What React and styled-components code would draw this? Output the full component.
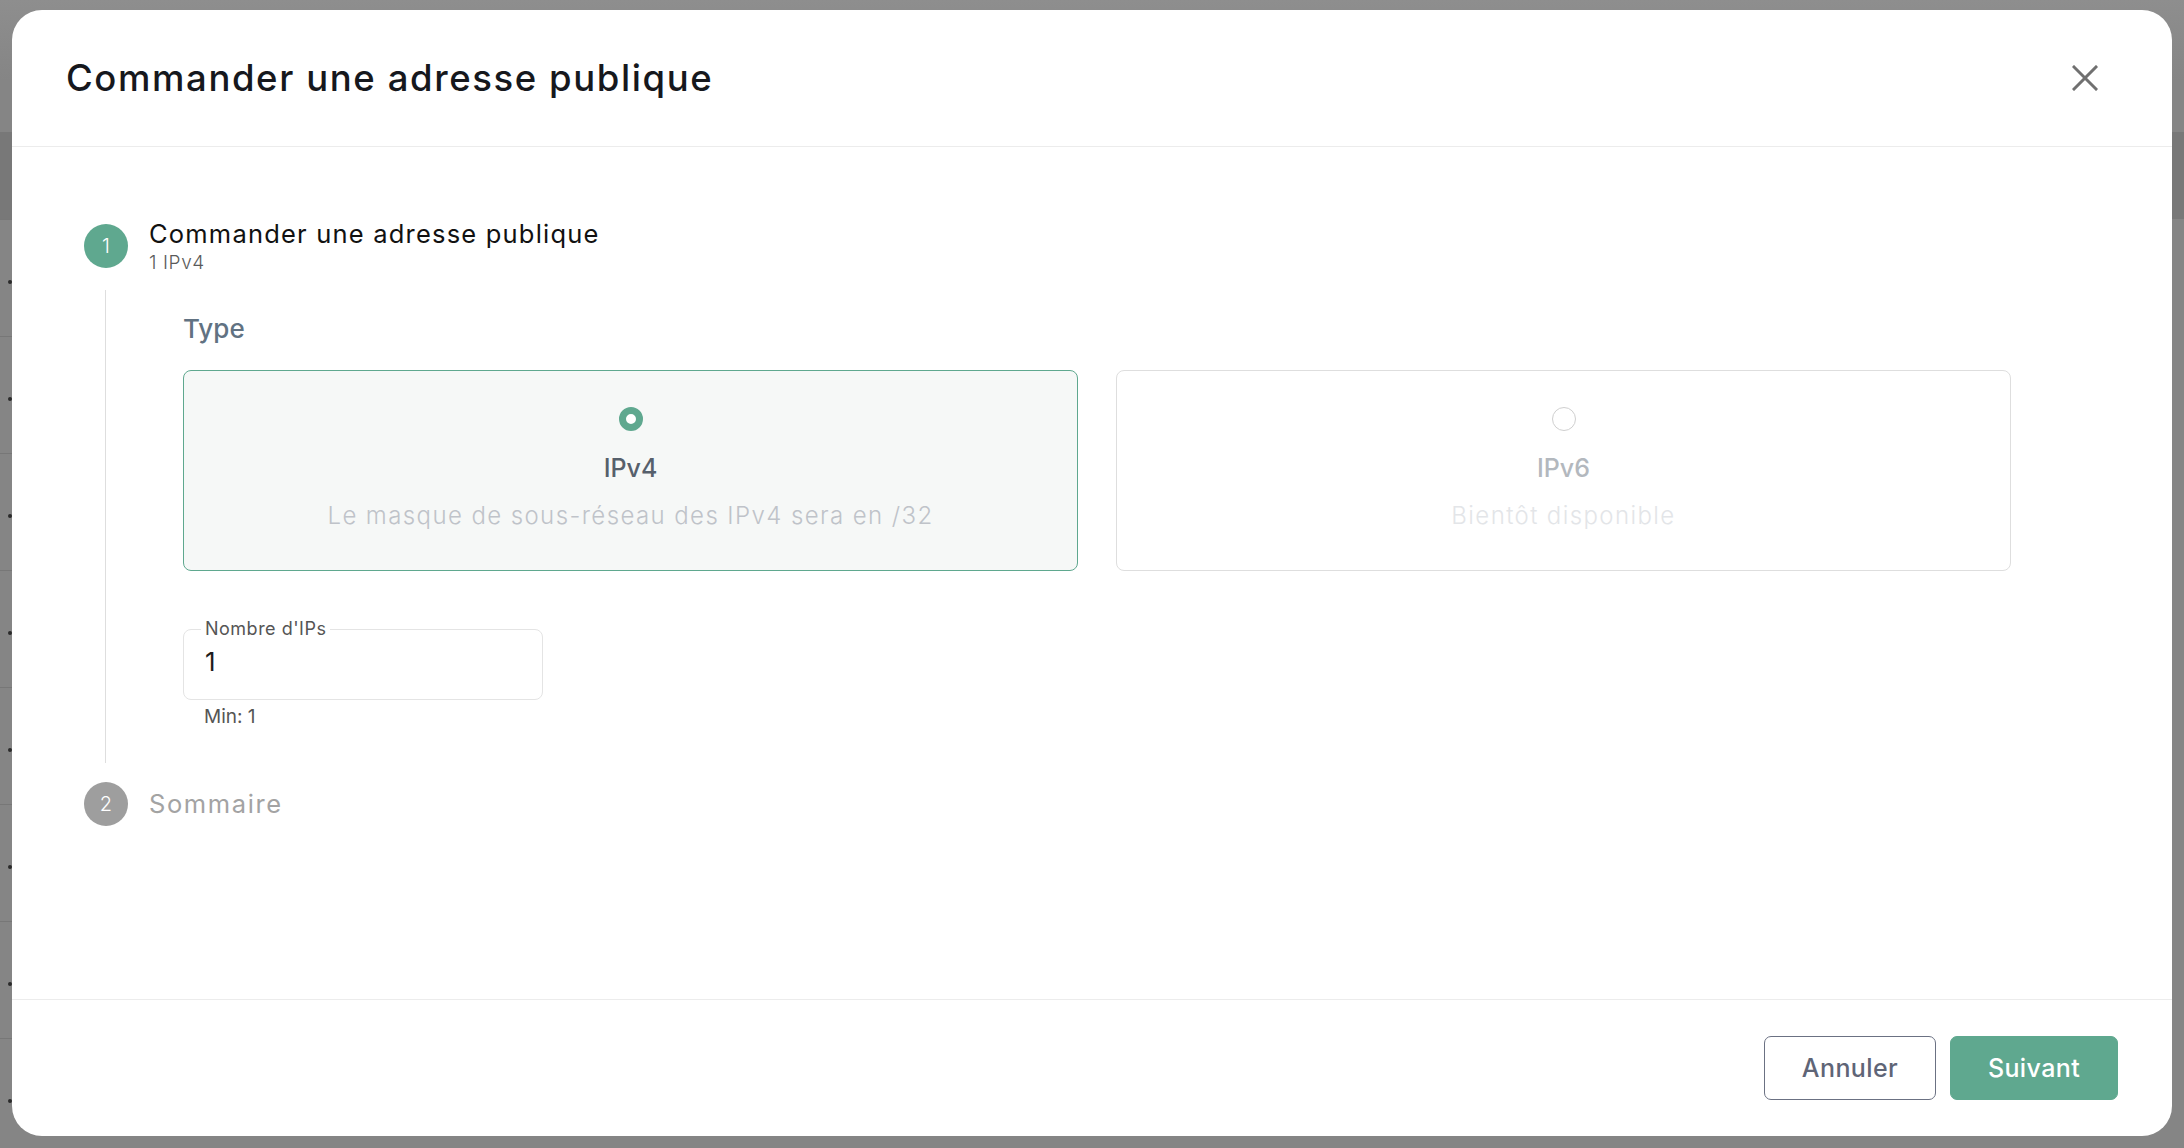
import React from "react";
import styled, { createGlobalStyle } from "styled-components";

const GlobalStyle = createGlobalStyle`
  html, body {
    margin: 0;
    height: 100%;
  }
  body {
    background: #858585;
    font-family: Inter, "Noto Sans", sans-serif;
    overflow: hidden;
  }
`;

const TEAL = "#5fa88f";

const Screen = styled.div`
  position: relative;
  width: 2184px;
  height: 1148px;
  overflow: hidden;
`;

/* dimmed page behind the dialog: only its left edge peeks out */
const Page = styled.div`
  padding-top: 132px;
  background: linear-gradient(#8e8e8e 0, #858585 80px);
  height: 100%;
  box-sizing: border-box;
`;

const PageHead = styled.div`
  height: 87px;
  background: #787878;
`;

const PageRow = styled.div`
  height: 116px;
  border-top: 1px solid #777;
  display: flex;
  align-items: center;
  justify-content: flex-end;
  width: 14px;

  &::after {
    content: "";
    width: 4px;
    height: 4px;
    margin: 8px 2px 0 0;
    border-radius: 50%;
    background: #2a2a2a;
  }
`;

const Overlay = styled.div`
  position: absolute;
  inset: 0;
  padding: 10px 12px 12px;
`;

const Modal = styled.div`
  height: 100%;
  background: #fff;
  border-radius: 30px;
  display: flex;
  flex-direction: column;
  overflow: hidden;
`;

const Header = styled.header`
  height: 136px;
  flex: none;
  padding: 0 54px;
  display: flex;
  align-items: center;
  justify-content: space-between;
  border-bottom: 1px solid #ececec;

  h1 {
    margin: 0;
    font-size: 36.5px;
    font-weight: 500;
    letter-spacing: 1.6px;
    color: #16181d;
  }
`;

const CloseButton = styled.button`
  width: 40px;
  height: 40px;
  margin-right: 13px;
  padding: 0;
  border: 0;
  background: none;
  display: flex;
  align-items: center;
  justify-content: center;
  cursor: pointer;
`;

const Body = styled.main`
  flex: 1;
  padding: 70px 0 0 72px;
`;

const StepHead = styled.div`
  display: flex;
  align-items: center;
  gap: 21px;
`;

const StepCircle = styled.div`
  width: 44px;
  height: 44px;
  flex: none;
  border-radius: 50%;
  background: ${(p) => p.$color};
  color: #fff;
  font-size: 20px;
  font-weight: 300;
  display: flex;
  align-items: center;
  justify-content: center;
`;

const StepTitle = styled.div`
  font-size: 25.5px;
  line-height: 34px;
  letter-spacing: ${(p) => (p.$muted ? "1.6px" : "1.2px")};
  color: ${(p) => (p.$muted ? "#a3a3a3" : "#111")};
`;

const StepSub = styled.div`
  font-size: 19px;
  line-height: 24px;
  font-weight: 300;
  letter-spacing: 0.6px;
  color: #5a5a5a;
`;

const StepContent = styled.div`
  margin: 15px 0 0 21px;
  border-left: 1.5px solid #dedede;
  padding: 21px 0 33px 77px;
`;

const SectionLabel = styled.div`
  font-size: 26px;
  line-height: 36px;
  font-weight: 500;
  color: #617282;
`;

const CardGrid = styled.div`
  margin-top: 23px;
  width: 1828px;
  display: grid;
  grid-template-columns: 1fr 1fr;
  gap: 38px;
`;

const Card = styled.div`
  height: 201px;
  box-sizing: border-box;
  border: 1.5px solid ${(p) => (p.$selected ? TEAL : "#dedede")};
  background: ${(p) => (p.$selected ? "#f6f8f7" : "#fff")};
  border-radius: 8px;
  padding-top: 36px;
  display: flex;
  flex-direction: column;
  align-items: center;
  cursor: ${(p) => (p.$disabled ? "default" : "pointer")};
`;

const Radio = styled.span`
  width: 24px;
  height: 24px;
  box-sizing: border-box;
  border-radius: 50%;
  background: #fff;
  border: ${(p) => (p.$checked ? `7px solid ${TEAL}` : "1.5px solid #cfcfcf")};
`;

const CardTitle = styled.div`
  margin-top: 20px;
  font-size: 25px;
  line-height: 34px;
  font-weight: 500;
  color: ${(p) => (p.$disabled ? "#b3b8be" : "#56606c")};
`;

const CardText = styled.div`
  margin-top: 14px;
  font-size: 24px;
  line-height: 34px;
  font-weight: 300;
  letter-spacing: 1.4px;
  color: ${(p) => (p.$disabled ? "#e3e5e8" : "#bfc3c9")};
`;

const Field = styled.fieldset`
  margin: 47px 0 0;
  width: 360px;
  box-sizing: border-box;
  padding: 0 17px 15px;
  border: 1px solid #e4e4e4;
  border-radius: 8px;

  legend {
    padding: 0 4px;
    font-size: 18px;
    line-height: 22px;
    letter-spacing: 0.5px;
    color: #555;
  }

  input {
    display: block;
    width: 100%;
    box-sizing: border-box;
    margin: 0;
    padding: 0 4px;
    border: 0;
    outline: none;
    background: none;
    font-family: inherit;
    font-size: 26px;
    line-height: 44px;
    height: 44px;
    color: #1c1c1c;
  }
`;

const Helper = styled.div`
  margin: 4px 0 0 21px;
  font-size: 19px;
  line-height: 26px;
  color: #555;
`;

const NextStep = styled(StepHead)`
  margin-top: 19px;
`;

const Footer = styled.footer`
  flex: none;
  border-top: 1px solid #ececec;
  padding: 36px 54px;
  display: flex;
  justify-content: flex-end;
  gap: 14px;
`;

const Button = styled.button`
  height: 64px;
  width: ${(p) => p.$width}px;
  border-radius: 7px;
  font-family: inherit;
  font-size: 25px;
  font-weight: 500;
  letter-spacing: 0.4px;
  cursor: pointer;
  border: 1.5px solid ${(p) => (p.$primary ? TEAL : "#6b7183")};
  background: ${(p) => (p.$primary ? TEAL : "#fff")};
  color: ${(p) => (p.$primary ? "#fff" : "#5f6577")};
`;

function CloseIcon() {
  return (
    <svg width="26" height="26" viewBox="0 0 26 26">
      <path
        d="M2 2 L24 24 M24 2 L2 24"
        stroke="#707070"
        strokeWidth="3"
        strokeLinecap="square"
        fill="none"
      />
    </svg>
  );
}

const types = [
  {
    id: "ipv4",
    title: "IPv4",
    text: "Le masque de sous-réseau des IPv4 sera en /32",
    selected: true,
  },
  { id: "ipv6", title: "IPv6", text: "Bientôt disponible", disabled: true },
];

const pageRows = Array.from({ length: 8 }, (_, i) => i);

export default function App() {
  return (
    <>
      <GlobalStyle />
      <Screen>
        <Page>
          <PageHead />
          {pageRows.map((i) => (
            <PageRow key={i} />
          ))}
        </Page>

        <Overlay>
          <Modal>
            <Header>
              <h1>Commander une adresse publique</h1>
              <CloseButton aria-label="Fermer">
                <CloseIcon />
              </CloseButton>
            </Header>

            <Body>
              <StepHead>
                <StepCircle $color={TEAL}>1</StepCircle>
                <div>
                  <StepTitle>Commander une adresse publique</StepTitle>
                  <StepSub>1 IPv4</StepSub>
                </div>
              </StepHead>

              <StepContent>
                <SectionLabel>Type</SectionLabel>
                <CardGrid>
                  {types.map((t) => (
                    <Card key={t.id} $selected={t.selected} $disabled={t.disabled}>
                      <Radio $checked={t.selected} />
                      <CardTitle $disabled={t.disabled}>{t.title}</CardTitle>
                      <CardText $disabled={t.disabled}>{t.text}</CardText>
                    </Card>
                  ))}
                </CardGrid>

                <Field>
                  <legend>Nombre d'IPs</legend>
                  <input type="text" defaultValue="1" />
                </Field>
                <Helper>Min: 1</Helper>
              </StepContent>

              <NextStep>
                <StepCircle $color="#9e9e9e">2</StepCircle>
                <StepTitle $muted>Sommaire</StepTitle>
              </NextStep>
            </Body>

            <Footer>
              <Button $width={172}>Annuler</Button>
              <Button $width={168} $primary>
                Suivant
              </Button>
            </Footer>
          </Modal>
        </Overlay>
      </Screen>
    </>
  );
}
